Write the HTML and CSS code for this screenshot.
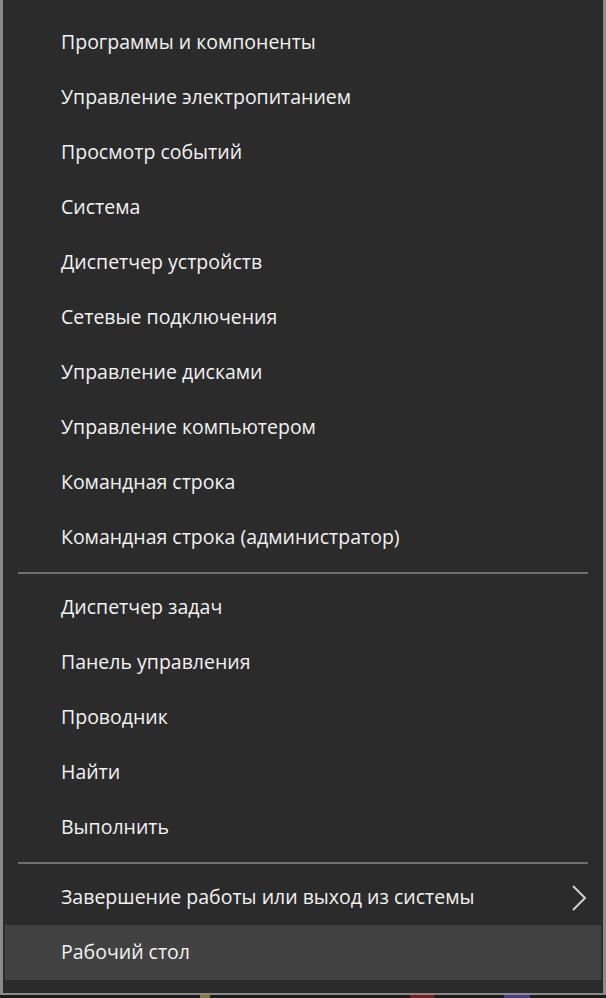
FILE: index.html
```html
<!DOCTYPE html>
<html lang="ru">
<head>
<meta charset="utf-8">
<title>Меню</title>
<link rel="stylesheet" href="styles.css">
</head>
<body>
<div class="menu">
  <ul class="group group-first">
    <li class="item">Программы и компоненты</li>
    <li class="item">Управление электропитанием</li>
    <li class="item">Просмотр событий</li>
    <li class="item">Система</li>
    <li class="item">Диспетчер устройств</li>
    <li class="item">Сетевые подключения</li>
    <li class="item">Управление дисками</li>
    <li class="item">Управление компьютером</li>
    <li class="item">Командная строка</li>
    <li class="item">Командная строка (администратор)</li>
  </ul>
  <div class="sep"></div>
  <ul class="group">
    <li class="item">Диспетчер задач</li>
    <li class="item">Панель управления</li>
    <li class="item">Проводник</li>
    <li class="item">Найти</li>
    <li class="item">Выполнить</li>
  </ul>
  <div class="sep"></div>
  <ul class="group group-last">
    <li class="item item-sub">Завершение работы или выход из системы
      <svg class="chev" width="16" height="26" viewBox="0 0 16 26"><path d="M2 1 L14 13 L2 25" fill="none" stroke="#d0d0d0" stroke-width="2"/></svg>
    </li>
    <li class="item item-active">Рабочий стол</li>
  </ul>
</div>
<div class="taskbar">
  <span class="tb tb1"></span>
  <span class="tb tb2"></span>
  <span class="tb tb3"></span>
</div>
</body>
</html>
```
FILE: styles.css
```css
html, body {
  margin: 0;
  padding: 0;
  background: #1c1c1c;
}
body {
  width: 606px;
  height: 998px;
  overflow: hidden;
  font-family: "Open Sans", "Noto Sans", sans-serif;
}
.menu {
  box-sizing: border-box;
  width: 606px;
  height: 995px;
  background: #2b2b2b;
  border-left: 3px solid #8a8a8a;
  border-right: 3px solid #8a8a8a;
  border-bottom: 2px solid #8a8a8a;
  padding: 15px 2px 13px 2px;
}
.group {
  list-style: none;
  margin: 0;
  padding: 0;
}
.item {
  box-sizing: border-box;
  height: 55px;
  display: flex;
  align-items: center;
  padding-left: 56px;
  padding-right: 14px;
  padding-bottom: 3px;
  color: #f2f2f2;
  font-size: 19.5px;
}
.item-sub {
  justify-content: space-between;
}
.chev {
  display: block;
  margin-top: 3px;
}
.item-active {
  background: #414141;
}
.sep {
  height: 15px;
  display: flex;
  align-items: center;
  padding: 0 13px;
}
.sep::before {
  content: "";
  display: block;
  flex: 1;
  height: 2px;
  background: #6e6e6e;
}
.taskbar {
  height: 3px;
  display: flex;
  background: #1c1c1c;
}
.tb {
  display: block;
  height: 3px;
}
.tb1 { width: 10px; margin-left: 200px; background: #8a7a30; }
.tb2 { width: 24px; margin-left: 200px; background: #7a1e22; }
.tb3 { width: 26px; margin-left: 70px; background: #4a3a8a; }
```
